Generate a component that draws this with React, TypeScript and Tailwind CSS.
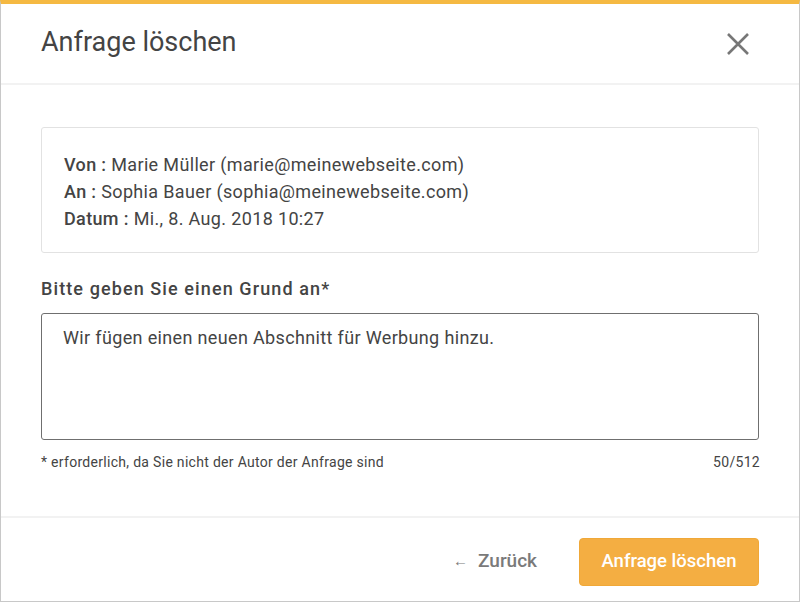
import React from 'react';

const font = { fontFamily: 'Roboto, "Noto Sans", Arial, sans-serif' };

function CloseIcon() {
  return (
    <svg width="24" height="24" viewBox="0 0 24 24" className="text-[#777]">
      <path d="M2 2 L22 22 M22 2 L2 22" stroke="currentColor" strokeWidth="2.6" fill="none" />
    </svg>
  );
}

export default function App() {
  return (
    <div
      className="w-[800px] h-[602px] bg-white border-t-4 border-t-[#f5b942] border-x border-b border-x-[#c8c8c8] border-b-[#c8c8c8] flex flex-col text-[#444]"
      style={font}
    >
      {/* Header */}
      <div className="h-[81px] shrink-0 flex items-center justify-between pl-[40px] pr-[50px] border-b-2 border-[#f2f2f2]">
        <h2 className="text-[27px] font-normal text-[#444] mt-[-2px]">Anfrage löschen</h2>
        <button className="p-0 -mr-[1px]">
          <CloseIcon />
        </button>
      </div>

      {/* Body */}
      <div className="h-[433px] shrink-0 px-[40px] pt-[42px] border-b-2 border-[#f2f2f2]">
        <div className="h-[126px] border border-[#e2e2e2] rounded-[3px] pl-[22px] pt-[23px] text-[18px] leading-[27px] tracking-[0.35px] text-[#444]">
          <div>
            <span className="font-medium">Von :</span> Marie Müller (marie@meinewebseite.com)
          </div>
          <div>
            <span className="font-medium">An :</span> Sophia Bauer (sophia@meinewebseite.com)
          </div>
          <div>
            <span className="font-medium">Datum :</span> Mi., 8. Aug. 2018 10:27
          </div>
        </div>

        <label className="block mt-[24px] text-[18px] leading-[24px] font-medium tracking-[1.1px] text-[#444]">
          Bitte geben Sie einen Grund an*
        </label>
        <div className="mt-[12px] h-[127px] border-[1.5px] border-[#6f6f6f] rounded-[3px] pl-[21px] pt-[11px] text-[18px] leading-[26px] tracking-[0.35px] text-[#444]">
          Wir fügen einen neuen Abschnitt für Werbung hinzu.
        </div>
        <div className="mt-[13px] flex justify-between text-[14px] leading-[18px] tracking-[0.3px] text-[#444]">
          <span>* erforderlich, da Sie nicht der Autor der Anfrage sind</span>
          <span className="mr-[-1px]">50/512</span>
        </div>
      </div>

      {/* Footer */}
      <div className="flex-1 flex items-center justify-end pr-[40px] pt-[4px] gap-[42px]">
        <button className="flex items-center gap-[10px] text-[19px] font-medium text-[#7a7a7a]">
          <span className="text-[15px]">←</span>
          <span>Zurück</span>
        </button>
        <button className="w-[180px] h-[48px] rounded-[4px] bg-[#f4ae42] border border-[#f0a838] text-white text-[18.5px] font-medium">
          Anfrage löschen
        </button>
      </div>
    </div>
  );
}
